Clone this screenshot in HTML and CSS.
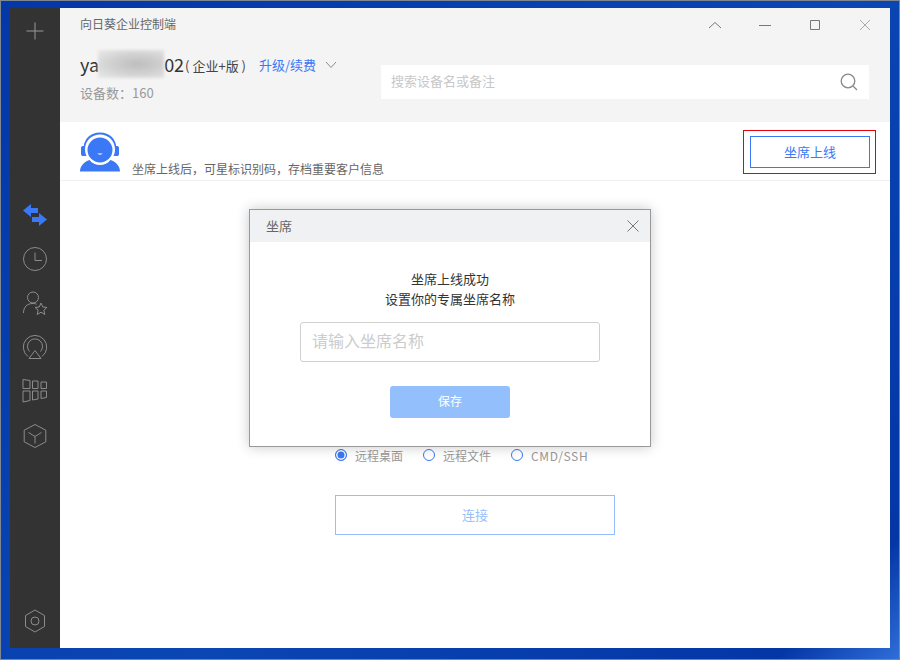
FILE: index.html
```html
<!DOCTYPE html>
<html>
<head>
    <meta charset="UTF-8">
    <title>向日葵企业控制端</title>
    <link rel="stylesheet" href="styles.css">
</head>
<body>
    <div class="app-window">
        <div class="sidebar">
            <svg class="side-plus" width="20" height="20" viewBox="0 0 20 20"><path d="M10 1.500V18.500M1.500 10H18.500"/></svg>
            <div class="side-nav">
                <svg width="26" height="24" viewBox="0 0 26 24"><path class="fill-blue" d="M1 7.500 9 1V5H16V10H9V14ZM25 16.500 17 23V19H10V14H17V10Z"/></svg>
                <svg width="26" height="26" viewBox="0 0 26 26"><circle cx="13" cy="13" r="11.500"/><path d="M13 6.500V14.500H20"/></svg>
                <svg width="26" height="26" viewBox="0 0 26 26"><circle cx="11" cy="7.500" r="5.500"/><path d="M1.500 23C1.500 17 5 13.500 11 13.500C12.500 13.500 13.500 13.700 14.500 14.200"/><path d="M19 13 20.800 17 25 17.400 21.900 20.100 22.800 24.500 19 22.200 15.200 24.500 16.100 20.100 13 17.400 17.200 17Z"/></svg>
                <svg width="26" height="26" viewBox="0 0 26 26"><path d="M6 22.500A11.700 11.700 0 1 1 20 22.500"/><path d="M7.500 17.500A7.500 7.500 0 1 1 18.500 17.500"/><path d="M13 16.500 19 24.500H7Z"/></svg>
                <svg width="26" height="26" viewBox="0 0 26 26"><path d="M1 1.500 8 2.500V10.500H1ZM10.500 3H16V10.500H10.500ZM19 4H24.500V10.500H19ZM1 13H8V22.500L1 24ZM10.500 13H16V21L10.500 22ZM19 13H24.500V19.500L19 20.500Z"/></svg>
                <svg class="side-cube" width="26" height="26" viewBox="0 0 26 26"><path d="M13 1.500 23.800 7.200V18.800L13 24.500 2.200 18.800V7.200Z"/><path d="M6.500 9.500 13 13.500 19.500 9.500M13 13.500V20.500"/></svg>
            </div>
            <svg class="side-settings" width="24" height="26" viewBox="0 0 24 26"><path d="M12 2 21.500 7.500V18.500L12 24 2.500 18.500V7.500Z"/><circle cx="12" cy="13" r="4"/></svg>
        </div>

        <div class="main">
            <div class="header">
                <div class="title-bar">
                    <span class="app-title">向日葵企业控制端</span>
                    <div class="window-btns">
                        <svg width="14" height="14" viewBox="0 0 14 14"><path d="M1 10 7 4.500 13 10"/></svg>
                        <svg width="14" height="14" viewBox="0 0 14 14"><path d="M1 7.500H13"/></svg>
                        <svg width="14" height="14" viewBox="0 0 14 14"><path d="M2.500 2.500H11.500V11.500H2.500Z"/></svg>
                        <svg class="btn-close" width="14" height="14" viewBox="0 0 14 14"><path d="M2 2 12 12M12 2 2 12"/></svg>
                    </div>
                </div>
                <div class="account-row">
                    <div class="account">
                        <div class="account-name">
                            <span class="user-name">ya</span><span class="name-blur"></span><span class="user-name">02</span>
                            <span class="edition">( 企业+版 )</span>
                            <a class="upgrade">升级/续费</a>
                            <svg class="chevron" width="12" height="8" viewBox="0 0 12 8"><path d="M1 1 6 6.500 11 1"/></svg>
                        </div>
                        <div class="device-count">设备数：160</div>
                    </div>
                    <div class="search-box">
                        <span class="search-hint">搜索设备名或备注</span>
                        <svg width="18" height="18" viewBox="0 0 18 18"><circle cx="8" cy="8" r="6.800"/><path d="M13 13 17 17"/></svg>
                    </div>
                </div>
            </div>

            <div class="seat-bar">
                <div class="seat-info">
                    <svg class="seat-icon" width="40" height="41" viewBox="0 0 40 41">
                        <path d="M20 1.500C10 1.500 4.500 8.500 3.800 15H2.800C1.500 15 1 16 1 17V23C1 24.500 2 25 3 25H6.500C5.500 23 5 20.500 5 18.500C5 10 11.500 3.500 20 3.500S35 10 35 18.500C35 20.500 34.500 23 33.500 25H37C38 25 39 24.500 39 23V17C39 16 38.500 15 37.200 15H36.200C35.500 8.500 30 1.500 20 1.500Z"/>
                        <path fill-rule="evenodd" d="M20 6.500A12.500 12.500 0 1 1 20 31.500 12.500 12.500 0 1 1 20 6.500ZM17.500 22.500C18 24 22 24 22.500 22.500Z"/>
                        <path d="M9.500 29C12 32.500 16 34 20 34S28 32.500 30.500 29C36 31 40 35 40 40.500H0C0 35 4 31 9.500 29Z"/>
                    </svg>
                    <span class="seat-tip">坐席上线后，可星标识别码，存档重要客户信息</span>
                </div>
                <div class="seat-btn-outline">
                    <a class="seat-btn">坐席上线</a>
                </div>
            </div>

            <div class="connect-panel">
                <div class="radio-row">
                    <label class="radio checked"><i></i>远程桌面</label>
                    <label class="radio"><i></i>远程文件</label>
                    <label class="radio radio-latin"><i></i>CMD/SSH</label>
                </div>
                <div class="connect-btn">连接</div>
            </div>
        </div>

        <div class="dialog">
            <div class="dialog-head">
                <span class="dialog-title">坐席</span>
                <svg width="12" height="12" viewBox="0 0 12 12"><path d="M0.500 0.500 11.500 11.500M11.500 0.500 0.500 11.500"/></svg>
            </div>
            <div class="dialog-body">
                <p class="dialog-text">坐席上线成功<br>设置你的专属坐席名称</p>
                <input class="dialog-input" type="text" placeholder="请输入坐席名称">
                <button class="save-btn">保存</button>
            </div>
        </div>
    </div>
</body>
</html>
```

FILE: styles.css
```css
html, body {
    margin: 0;
    padding: 0;
}

body {
    width: 900px;
    height: 660px;
    box-sizing: border-box;
    padding: 7px 9px 11px 9px;
    border: 1px solid #7f8790;
    background: linear-gradient(135deg, #0437a8 0%, #0a46b4 55%, #0436a6 92%, #2f6fd8 100%);
    font-family: "Noto Sans CJK SC", "Liberation Sans", sans-serif;
    overflow: hidden;
}

svg {
    fill: none;
    stroke: #8d8d8d;
    stroke-width: 1;
    display: block;
}

.app-window {
    position: relative;
    width: 880px;
    height: 640px;
    display: flex;
    background-color: #fff;
}

/* left rail */
.sidebar {
    width: 50px;
    flex: none;
    background-color: #333;
    display: flex;
    flex-direction: column;
    align-items: center;
}

.side-plus {
    margin-top: 13px;
    stroke: #999;
}

.side-nav {
    margin-top: 162px;
    display: flex;
    flex-direction: column;
    align-items: center;
    gap: 18px;
}

.side-nav svg {
    stroke: #8c8c8c;
}

.side-nav svg:first-child {
    margin-bottom: 1px;
}

.side-nav .side-cube {
    margin-top: 1px;
}

.side-nav .fill-blue {
    fill: #3a78f5;
    stroke: none;
}

.side-settings {
    margin-top: auto;
    margin-bottom: 14px;
    stroke: #8c8c8c;
}

/* main column */
.main {
    flex: 1;
    display: flex;
    flex-direction: column;
}

.header {
    height: 114px;
    background-color: #f4f4f4;
    box-sizing: border-box;
    padding: 0 21px 0 20px;
}

.title-bar {
    height: 34px;
    display: flex;
    align-items: center;
    justify-content: space-between;
}

.app-title {
    font-size: 12px;
    color: #666;
    margin-bottom: 3px;
}

.window-btns {
    display: flex;
    gap: 36px;
    margin-right: -3px;
}

.window-btns svg {
    stroke: #777;
}

.window-btns .btn-close {
    stroke: #aaa;
}

.account-row {
    display: flex;
    justify-content: space-between;
    align-items: flex-start;
}

.account-name {
    display: flex;
    align-items: center;
    height: 28px;
    margin-top: 8px;
}

.user-name {
    font-size: 18px;
    color: #333;
}

.name-blur {
    width: 66px;
    height: 28px;
    margin-left: -1px;
    background: radial-gradient(ellipse at 60% 50%, #bdbdbd 0%, #d2d2d2 50%, #e9e9e9 100%);
    filter: blur(1.5px);
}

.edition {
    font-size: 13px;
    color: #444;
    margin-left: 1px;
    margin-top: 2px;
}

.upgrade {
    font-size: 13px;
    color: #3a78f5;
    margin-left: 13px;
}

.chevron {
    margin-left: 9px;
    margin-top: 1px;
}

.device-count {
    font-size: 13px;
    color: #999;
    margin-top: 5px;
}

.search-box {
    width: 488px;
    height: 34px;
    margin-top: 23px;
    box-sizing: border-box;
    padding: 0 11px 0 10px;
    background-color: #fff;
    display: flex;
    align-items: center;
    justify-content: space-between;
    font-size: 13px;
    color: #c8c8c8;
}

.search-hint {
    margin-bottom: 3px;
}

.search-box svg {
    stroke: #888;
    stroke-width: 1.300;
}

.seat-bar {
    height: 59px;
    box-sizing: border-box;
    border-bottom: 1px solid #f0f0f0;
    padding: 8px 20px 0 20px;
    display: flex;
    justify-content: space-between;
}

.seat-info {
    display: flex;
    align-items: flex-end;
    padding-bottom: 3px;
}

.seat-icon {
    fill: #3a78f5;
    stroke: none;
    margin-bottom: 5px;
}

.seat-tip {
    font-size: 12px;
    color: #666;
    margin-left: 12px;
}

.seat-btn-outline {
    width: 133px;
    height: 44px;
    box-sizing: border-box;
    border: 1px solid #e8000b;
    padding: 5px 5px 5px 6px;
    margin-right: -6px;
}

.seat-btn {
    display: block;
    height: 32px;
    line-height: 30px;
    box-sizing: border-box;
    border: 1px solid #3a78f5;
    color: #3a78f5;
    font-size: 13px;
    text-align: center;
}

.connect-panel {
    flex: 1;
    display: flex;
    flex-direction: column;
    align-items: center;
    padding-top: 264px;
}

.radio-row {
    width: 280px;
    display: flex;
    gap: 20px;
    height: 20px;
    align-items: center;
}

.radio {
    display: flex;
    align-items: center;
    font-size: 12px;
    color: #999;
}

.radio-latin {
    letter-spacing: 0.6px;
}

.radio i {
    width: 10px;
    height: 10px;
    border: 1px solid #3a78f5;
    border-radius: 50%;
    margin-right: 8px;
}

.radio.checked i {
    background-color: #3a78f5;
    box-shadow: inset 0 0 0 1.500px #fff;
}

.connect-btn {
    width: 280px;
    height: 40px;
    margin-top: 30px;
    box-sizing: border-box;
    border: 1px solid #94bffd;
    color: #94bffd;
    font-size: 13px;
    line-height: 38px;
    text-align: center;
}

/* dialog */
.dialog {
    position: absolute;
    left: 239px;
    top: 201px;
    width: 402px;
    height: 238px;
    box-sizing: border-box;
    border: 1px solid #999;
    background-color: #fff;
    box-shadow: 0 0 12px rgba(0, 0, 0, 0.22);
}

.dialog-head {
    height: 32px;
    padding: 0 11px 0 16px;
    background-color: #f0f1f3;
    display: flex;
    align-items: center;
    justify-content: space-between;
    font-size: 13px;
    color: #666;
}

.dialog-title {
    margin-bottom: 2px;
}

.dialog-head svg {
    stroke: #777;
}

.dialog-body {
    display: flex;
    flex-direction: column;
    align-items: center;
}

.dialog-text {
    margin: 27px 0 0 0;
    font-size: 13px;
    line-height: 20px;
    color: #333;
    text-align: center;
}

.dialog-input {
    width: 300px;
    height: 40px;
    margin-top: 13px;
    box-sizing: border-box;
    border: 1px solid #d0d0d0;
    border-radius: 3px;
    padding: 0 11px 5px 11px;
    font-family: "Noto Sans CJK SC", "Liberation Sans", sans-serif;
    font-size: 16px;
}

.dialog-input::placeholder {
    color: #ccc;
}

.save-btn {
    width: 120px;
    height: 32px;
    margin-top: 24px;
    padding: 0 0 3px 0;
    border: none;
    border-radius: 3px;
    background-color: #94bffd;
    color: #fff;
    font-family: "Noto Sans CJK SC", "Liberation Sans", sans-serif;
    font-size: 12px;
}
```
